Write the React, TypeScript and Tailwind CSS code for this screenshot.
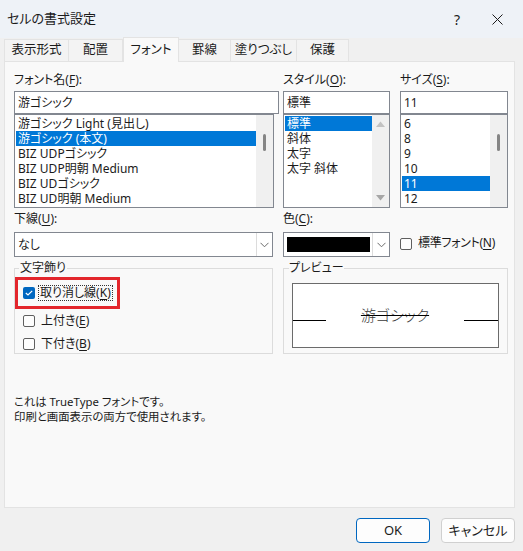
import React from "react";

const fontItems = [
  "游ゴシック Light (見出し)",
  "游ゴシック (本文)",
  "BIZ UDPゴシック",
  "BIZ UDP明朝 Medium",
  "BIZ UDゴシック",
  "BIZ UD明朝 Medium",
];
const styleItems = ["標準", "斜体", "太字", "太字 斜体"];
const sizeItems = ["6", "8", "9", "10", "11", "12"];

function Chevron() {
  return (
    <svg width="9" height="6" viewBox="0 0 9 6" className="text-[#6b6b6b]">
      <path d="M0.5 0.8 L4.5 4.8 L8.5 0.8" fill="none" stroke="currentColor" strokeWidth="1" />
    </svg>
  );
}

function Check({ checked }: { checked?: boolean }) {
  if (checked) {
    return (
      <span className="flex h-[12px] w-[12px] items-center justify-center rounded-[2px] bg-[#0067c0]">
        <svg width="8" height="6" viewBox="0 0 8 6">
          <path d="M0.8 3 L3 5 L7.2 0.8" fill="none" stroke="white" strokeWidth="1.2" />
        </svg>
      </span>
    );
  }
  return <span className="h-[12px] w-[12px] rounded-[2px] border border-[#5f5f5f] bg-[#fdfdfd]" />;
}

function ListBox({
  items,
  selected,
  width,
  highlight,
  arrows,
}: {
  items: string[];
  selected: number;
  width: string;
  highlight: string;
  arrows?: boolean;
}) {
  return (
    <div className={`flex h-[94px] border border-[#828790] bg-white ${width}`}>
      <div className="flex flex-1 flex-col pt-[1px] pl-[1px]">
        {items.map((t, i) => (
          <div
            key={t}
            className={`h-[15px] pl-[2px] leading-[15px] whitespace-nowrap ${
              i === selected ? `bg-[#0078d7] text-white ${highlight}` : ""
            }`}
          >
            {t}
          </div>
        ))}
      </div>
      <div className="flex w-[17px] flex-col items-center bg-[#f0f0f0]">
        {arrows ? (
          <>
            <svg width="9" height="6" viewBox="0 0 9 6" className="mt-[6px]">
              <path d="M0 6 L4.5 0.5 L9 6 Z" fill="#c2c2c2" />
            </svg>
            <div className="flex-1" />
            <svg width="9" height="6" viewBox="0 0 9 6" className="mb-[6px]">
              <path d="M0 0 L4.5 5.5 L9 0 Z" fill="#a6a6a6" />
            </svg>
          </>
        ) : (
          <div className="mt-[19px] h-[17px] w-[3px] rounded-full bg-[#858585]" />
        )}
      </div>
    </div>
  );
}

function Mn({ k }: { k: string }) {
  return <span className="underline underline-offset-2">{k}</span>;
}

export default function App() {
  const tabs = [
    { t: "表示形式", w: "w-[65px]" },
    { t: "配置", w: "w-[54px]" },
    { t: "フォント", w: "w-[56px]", active: true },
    { t: "罫線", w: "w-[52px]" },
    { t: "塗りつぶし", w: "w-[66px]" },
    { t: "保護", w: "w-[52px]" },
  ];

  return (
    <div className="flex h-[551px] w-[523px] flex-col bg-[#f0f0f0] font-['Noto_Sans','Noto_Sans_CJK_JP',sans-serif] text-[12px] text-[#1b1b1b] [font-feature-settings:'palt']">
      {/* title bar */}
      <div className="flex h-[38px] items-center bg-[#eef2f7] pl-[7px]">
        <span className="text-[13px]">セルの書式設定</span>
        <span className="ml-auto mr-[32px] text-[14px]">?</span>
        <svg width="11" height="11" viewBox="0 0 11 11" className="mr-[20px]">
          <path d="M0.5 0.5 L10.5 10.5 M10.5 0.5 L0.5 10.5" stroke="#1b1b1b" strokeWidth="1" />
        </svg>
      </div>

      {/* tabs */}
      <div className="flex h-[23px] items-end pl-[4px] text-[12.5px]">
        {tabs.map((tab) =>
          tab.active ? (
            <div
              key={tab.t}
              className={`relative z-10 -mb-px flex h-[25px] items-center justify-center border border-b-0 border-[#e3e3e3] bg-[#f9f9f9] ${tab.w}`}
            >
              {tab.t}
            </div>
          ) : (
            <div
              key={tab.t}
              className={`flex h-[22px] items-center justify-center border border-b-0 border-l-0 border-[#e3e3e3] bg-[#f3f3f3] first:border-l ${tab.w}`}
            >
              {tab.t}
            </div>
          )
        )}
      </div>

      {/* panel */}
      <div className="ml-[4px] flex h-[447px] w-[511px] flex-col border border-[#e3e3e3] bg-[#f9f9f9] pl-[9px] pt-[11px]">
        <div className="flex">
          <div className="flex w-[265px] flex-col">
            <div className="h-[14px] leading-[14px]">
              フォント名(<Mn k="F" />):
            </div>
            <div className="mt-[4px] flex h-[23px] items-center border border-[#828790] bg-white pl-[3px]">游ゴシック</div>
            <ListBox items={fontItems} selected={1} width="w-[260px]" highlight="w-[240px]" />
          </div>
          <div className="ml-[4px] flex w-[107px] flex-col">
            <div className="h-[14px] leading-[14px]">
              スタイル(<Mn k="O" />):
            </div>
            <div className="mt-[4px] flex h-[23px] items-center border border-[#828790] bg-white pl-[3px]">標準</div>
            <ListBox items={styleItems} selected={0} width="w-[107px]" highlight="" arrows />
          </div>
          <div className="ml-[10px] flex w-[108px] flex-col">
            <div className="h-[14px] leading-[14px]">
              サイズ(<Mn k="S" />):
            </div>
            <div className="mt-[4px] flex h-[23px] items-center border border-[#828790] bg-white pl-[3px]">11</div>
            <ListBox items={sizeItems} selected={4} width="w-[108px]" highlight="" />
          </div>
        </div>

        {/* underline / color */}
        <div className="mt-[4px] flex">
          <div className="flex w-[259px] flex-col">
            <div className="h-[14px] leading-[14px]">
              下線(<Mn k="U" />):
            </div>
            <div className="mt-[6px] flex h-[25px] items-center border border-[#828790] bg-white">
              <span className="flex-1 pl-[3px]">なし</span>
              <span className="flex h-full w-[16px] items-center justify-center border-l border-[#dcdcdc]">
                <Chevron />
              </span>
            </div>
          </div>
          <div className="ml-[10px] flex w-[107px] flex-col">
            <div className="h-[14px] leading-[14px]">
              色(<Mn k="C" />):
            </div>
            <div className="mt-[6px] flex h-[25px] items-center border border-[#828790] bg-white">
              <span className="ml-[3px] h-[15px] w-[83px] bg-black" />
              <span className="ml-auto flex h-full w-[17px] items-center justify-center border-l border-[#dcdcdc]">
                <Chevron />
              </span>
            </div>
          </div>
          <div className="ml-[10px] flex items-end pb-[7px]">
            <Check />
            <span className="ml-[6px] leading-[14px] tracking-[-0.3px]">
              標準フォント(<Mn k="N" />)
            </span>
          </div>
        </div>

        {/* decorations / preview */}
        <div className="mt-[4px] flex">
          <fieldset className="h-[93px] w-[259px] border border-[#dcdcdc]">
            <legend className="ml-[4px] px-[1px] leading-[14px]">文字飾り</legend>
            <div className="mt-[2px] flex h-[32px] w-[105px] items-center border-[3px] border-[#e3262c] pl-[5px]">
              <Check checked />
              <span className="ml-[3px] border border-dotted border-[#333] px-[1px] leading-[14px]">
                取り消し線(<Mn k="K" />)
              </span>
            </div>
            <div className="mt-[4px] flex h-[16px] items-center pl-[8px]">
              <Check />
              <span className="ml-[6px]">
                上付き(<Mn k="E" />)
              </span>
            </div>
            <div className="mt-[7px] flex h-[16px] items-center pl-[8px]">
              <Check />
              <span className="ml-[6px]">
                下付き(<Mn k="B" />)
              </span>
            </div>
          </fieldset>
          <fieldset className="ml-[10px] h-[93px] w-[225px] border border-[#dcdcdc]">
            <legend className="ml-[5px] leading-[14px]">プレビュー</legend>
            <div className="ml-[8px] mt-[8px] flex h-[65px] w-[207px] items-center border border-[#6b6b6b] bg-white">
              <span className="mt-[10px] h-px w-[33px] bg-black" />
              <span className="flex-1 text-center text-[15px] font-light text-[#3a3a3a] line-through decoration-black">
                游ゴシック
              </span>
              <span className="mt-[10px] h-px w-[34px] bg-black" />
            </div>
          </fieldset>
        </div>

        <div className="mt-[40px] text-[11.4px] leading-[15px]">
          <div>これは TrueType フォントです。</div>
          <div>印刷と画面表示の両方で使用されます。</div>
        </div>
      </div>

      {/* buttons */}
      <div className="mt-[10px] flex justify-end gap-[11px] pr-[8px]">
        <button className="h-[25px] w-[74px] rounded-[4px] border border-[#0067c0] bg-[#fdfdfd] text-[13px]">OK</button>
        <button className="h-[25px] w-[74px] rounded-[4px] border border-[#d0d0d0] bg-[#fdfdfd] text-[13px]">キャンセル</button>
      </div>
    </div>
  );
}
